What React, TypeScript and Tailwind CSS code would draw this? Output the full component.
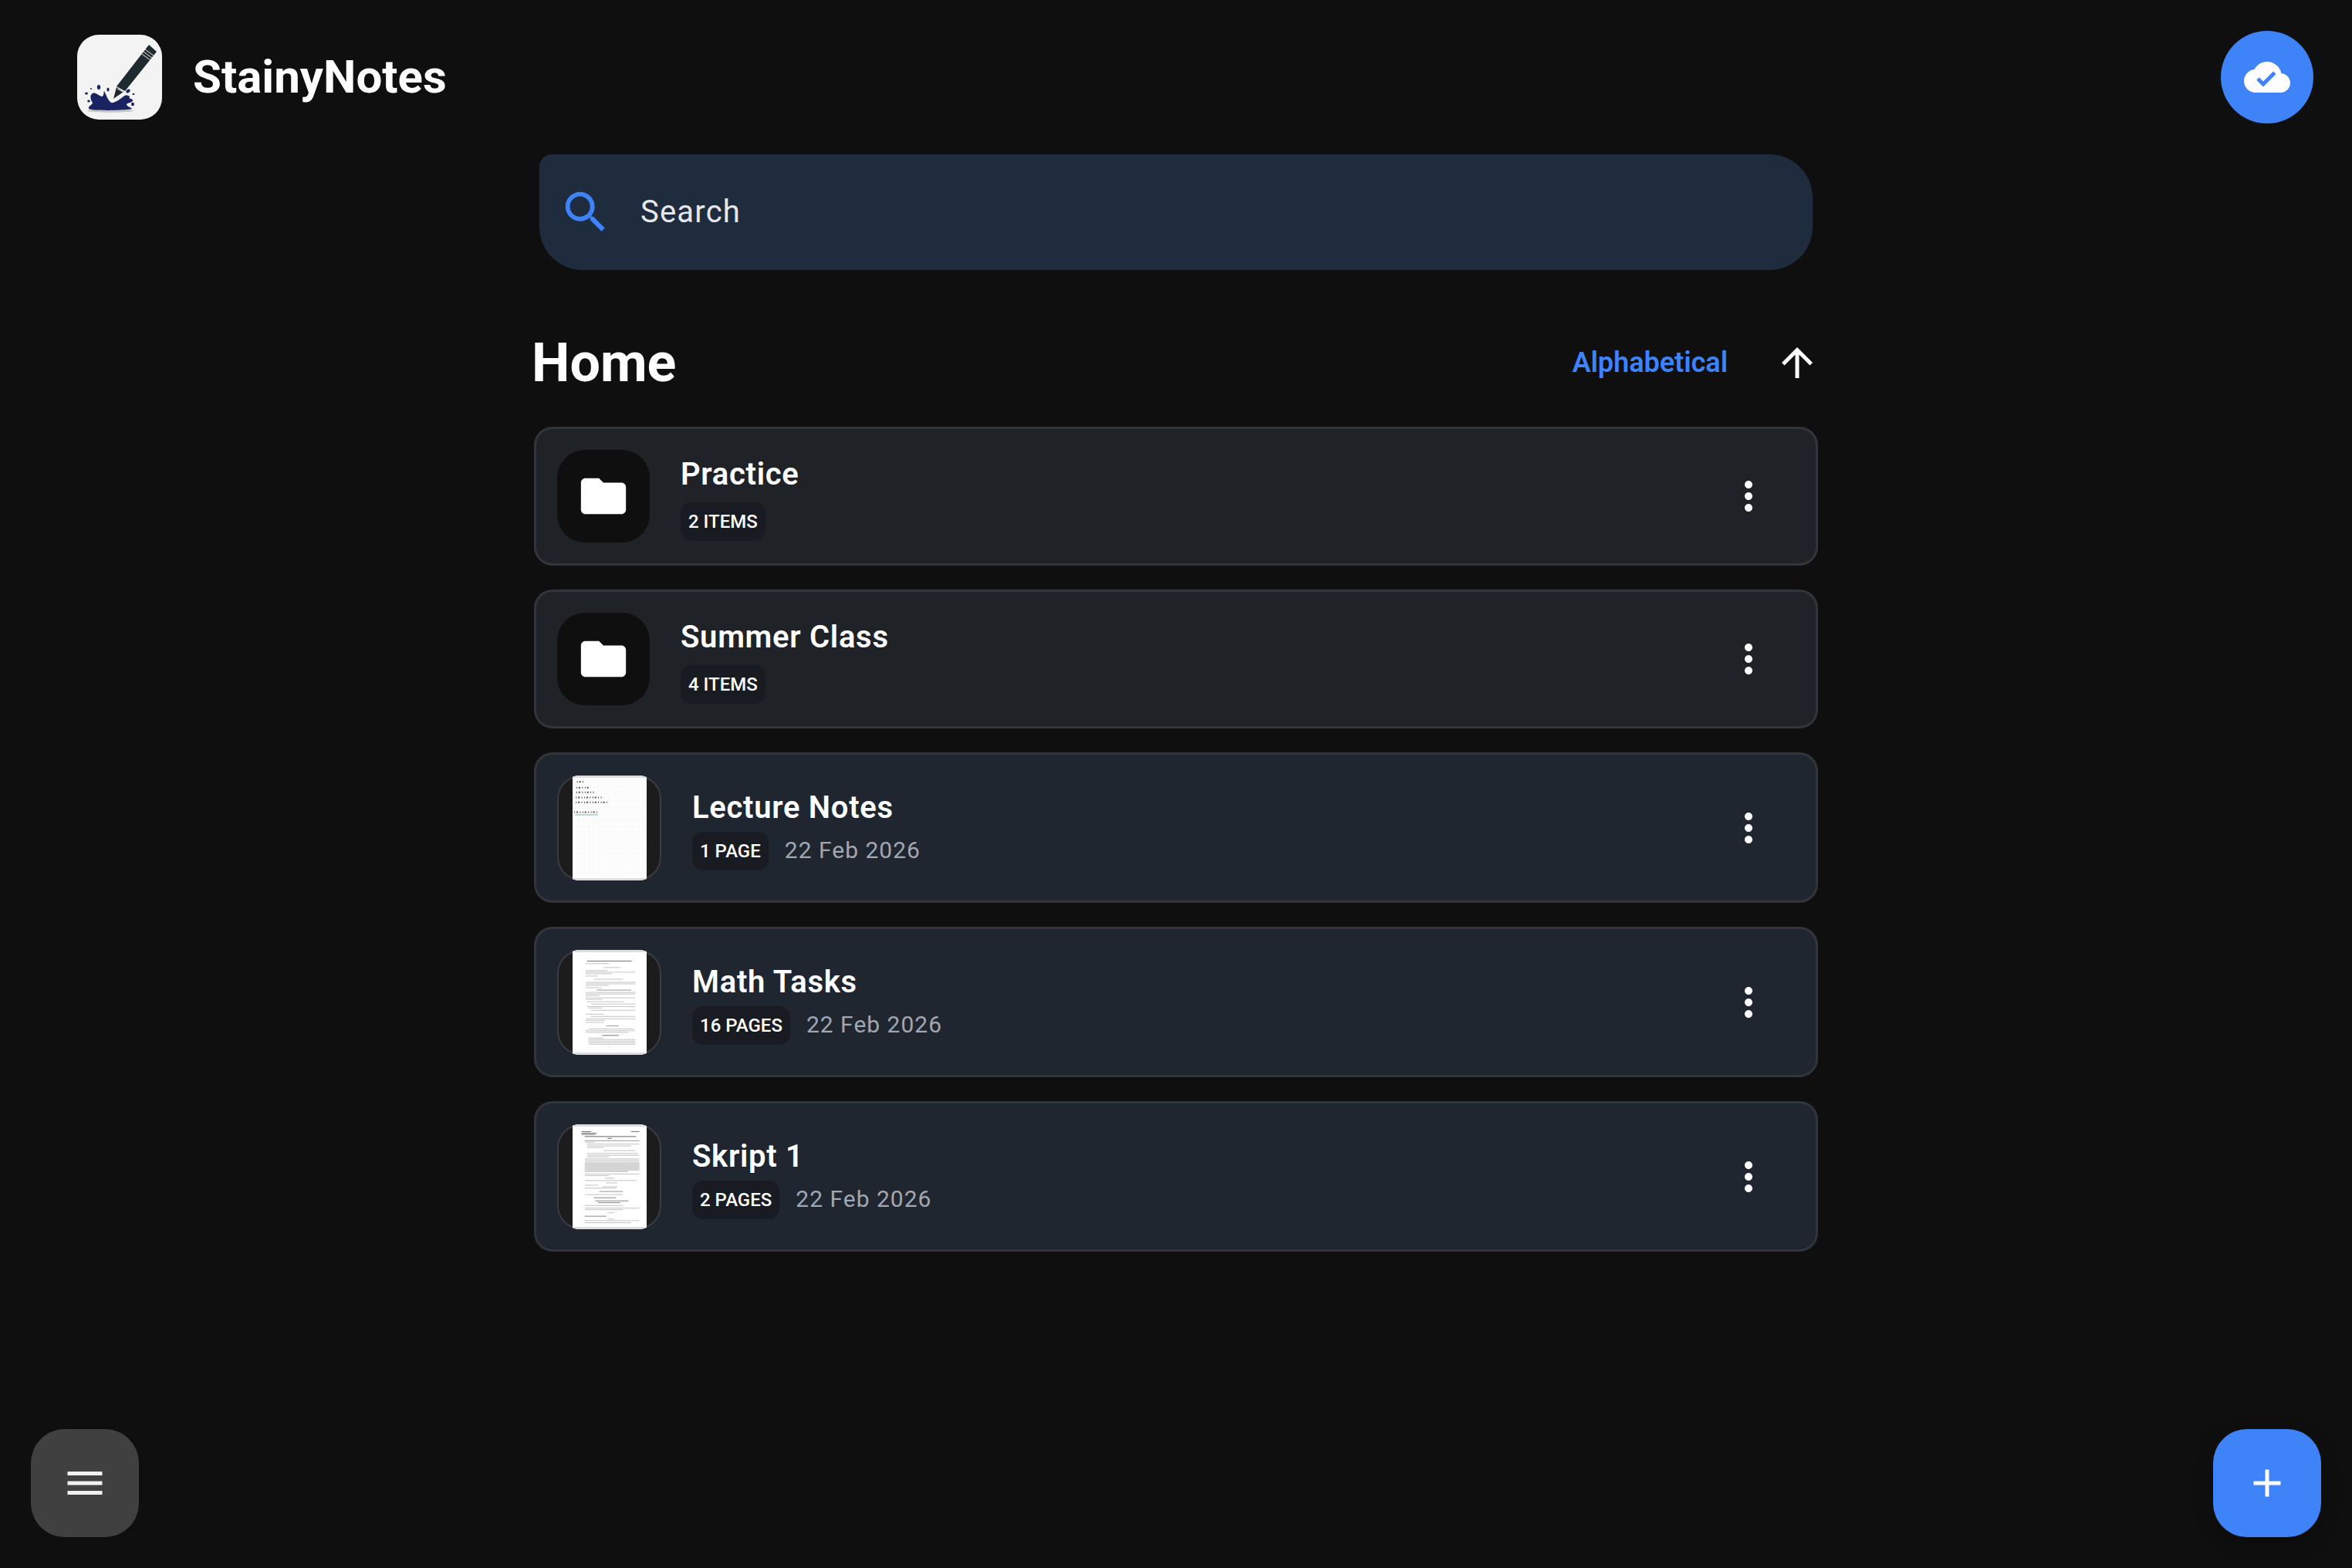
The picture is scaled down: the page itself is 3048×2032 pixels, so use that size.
import React from 'react';
import { MdAdd, MdArrowUpward, MdCloudDone, MdFolder, MdMenu, MdMoreVert, MdSearch } from 'react-icons/md';

type PageLine = [number, number, number, string?];

const MATH_LINES: PageLine[] = [
  [135, 170, 332, '#777'], [145, 165, 250], [160, 230, 290], [172, 165, 245], [178, 165, 345], [184, 165, 260],
  [193, 165, 210], [205, 195, 300], [217, 165, 345], [223, 165, 345], [229, 165, 250], [238, 165, 225],
  [247, 205, 330, '#999'], [256, 165, 345], [262, 165, 345], [268, 165, 215], [277, 165, 345], [283, 165, 225],
  [292, 170, 305], [301, 185, 345], [311, 170, 345], [316, 175, 225], [325, 185, 345], [340, 165, 230],
  [349, 185, 345], [358, 165, 345], [364, 165, 235], [372, 165, 230], [385, 240, 285, '#999'], [397, 175, 340],
  [404, 165, 345], [410, 165, 320], [422, 225, 285, '#777'], [432, 175, 230], [438, 175, 345], [444, 175, 345],
  [450, 175, 345], [456, 175, 345], [468, 249, 253],
];

const SKRIPT_LINES: PageLine[] = [
  [800, 150, 185, '#777'], [800, 330, 360, '#777'], [806, 150, 205, '#777'], [811, 150, 200, '#777'],
  [819, 162, 348, '#666'], [826, 245, 260, '#666'], [835, 162, 360, '#999'], [841, 162, 200], [848, 170, 360],
  [855, 170, 330], [861, 170, 230], [873, 230, 345], [884, 170, 355], [891, 170, 360], [897, 170, 250],
  [905, 162, 360], [911, 162, 360], [917, 162, 360], [923, 162, 360, '#aaa'], [929, 162, 360, '#aaa'],
  [935, 162, 360, '#aaa'], [941, 162, 360, '#aaa'], [947, 162, 360, '#aaa'], [953, 162, 320, '#aaa'],
  [963, 162, 360], [969, 162, 250], [979, 235, 270], [988, 162, 350], [997, 240, 280], [1006, 162, 210],
  [1012, 225, 280], [1017, 162, 275], [1030, 215, 300, '#999'], [1042, 162, 300], [1054, 195, 275, '#888'],
  [1066, 200, 320, '#888'], [1073, 210, 290, '#888'], [1084, 162, 300], [1094, 162, 360], [1100, 162, 300],
  [1112, 245, 270], [1125, 162, 240, '#888'], [1136, 245, 270], [1142, 162, 360], [1150, 162, 330],
];

const LECTURE_LINES: PageLine[] = [
  [128, 162, 192], [150, 160, 205], [168, 160, 228], [188, 158, 255], [207, 158, 275], [245, 152, 240],
];

function MathPage({ x, y, h, lines }: { x: number; y: number; h: number; lines: PageLine[] }) {
  return (
    <svg viewBox={`${x} ${y} 268 ${h}`} preserveAspectRatio="none" className="h-full w-[96px] shrink-0">
      <rect x={x} y={y} width="268" height={h} fill="#ffffff" />
      <rect x={x} y={y} width="268" height="9" fill="#dddddd" />
      <rect x={x} y={y + h - 9} width="268" height="9" fill="#dddddd" />
      {lines.map(([ly, x1, x2, color], i) => (
        <rect key={i} x={x1} y={ly - 1.5} width={x2 - x1} height="3" fill={color ?? '#c4c4c4'} />
      ))}
    </svg>
  );
}

function LecturePage() {
  const grid = Array.from({ length: 16 }, (_, i) => i);
  return (
    <svg viewBox="146 103 268 407" preserveAspectRatio="none" className="h-full w-[96px] shrink-0">
      <rect x="146" y="103" width="268" height="407" fill="#fdfdfd" />
      {grid.map(i => (
        <rect key={`h${i}`} x="146" y={120 + i * 26} width="268" height="1.5" fill="#f4f4f4" />
      ))}
      {grid.map(i => (
        <rect key={`v${i}`} x={150 + i * 18} y="103" width="1.5" height="407" fill="#f6f6f6" />
      ))}
      <rect x="146" y="103" width="268" height="9" fill="#dddddd" />
      <rect x="146" y="501" width="268" height="9" fill="#dddddd" />
      {LECTURE_LINES.map(([ly, x1, x2], i) => (
        <line key={i} x1={x1} x2={x2} y1={ly} y2={ly} stroke="#555" strokeWidth="6" strokeDasharray="3 5 6 6 3 7" />
      ))}
      <rect x="155" y="254" width="83" height="3" fill="#7fb0bd" />
    </svg>
  );
}

function Logo() {
  return (
    <svg viewBox="0 0 110 110" className="w-[110px] h-[110px] shrink-0">
      <rect width="110" height="110" rx="28" fill="#f3f3f3" />
      <ellipse cx="43" cy="98.5" rx="30" ry="2.2" fill="#b9b9b9" opacity="0.8" />
      <path d="M93 13 L103 22 L62 73 L51 67 Z" fill="#1f2a30" />
      <path d="M51 68 L60 74 L47 83 Z" fill="#1f2a30" />
      <path d="M52 70 L59 74" stroke="#f3f3f3" strokeWidth="1" />
      <path d="M88 19 L99 27 M86 22 L97 30 M84 25 L95 33" stroke="#f3f3f3" strokeWidth="1" />
      <path
        d="M15 96 C14 92 20 91 20 88 C17 84 16 78 20 76 C24 74 29 80 32 80 C35 80 34 74 35 73 C38 78 39 84 44 88 C48 89 55 84 60 80 C62 78 66 78 68 80 C66 84 72 82 72 85 C72 88 66 88 64 90 C64 93 70 94 71 96 C66 98 20 99 15 96 Z"
        fill="#1a2362"
      />
      <ellipse cx="28" cy="68" rx="2.2" ry="3" fill="#1a2362" />
      <ellipse cx="40" cy="71" rx="1.6" ry="2.6" fill="#1a2362" />
      <ellipse cx="12" cy="76" rx="2" ry="1.6" fill="#1a2362" />
      <ellipse cx="15" cy="86" rx="1.8" ry="1.6" fill="#1a2362" />
      <ellipse cx="18" cy="70" rx="1" ry="1" fill="#1a2362" />
      <ellipse cx="66" cy="73" rx="3" ry="2" fill="#1a2362" transform="rotate(-35 66 73)" />
      <ellipse cx="73" cy="77" rx="1.6" ry="1" fill="#1a2362" />
      <ellipse cx="72" cy="90" rx="2" ry="2.2" fill="#1a2362" />
    </svg>
  );
}

function Badge({ label }: { label: string }) {
  return (
    <span className="flex items-center h-[50px] px-[10px] rounded-[14px] bg-[#181b21] text-[24px] font-medium leading-none text-white">
      {label}
    </span>
  );
}

function MoreButton() {
  return <MdMoreVert className="ml-auto mr-[30px] text-white shrink-0" size={60} />;
}

function FolderCard({ name, count }: { name: string; count: string }) {
  return (
    <div className="flex items-center h-[180px] px-[27px] gap-10 rounded-[24px] border-3 border-[#32353b] bg-[#1f2328]">
      <div className="flex items-center justify-center w-[120px] h-[120px] rounded-[36px] bg-[#0f0f0f] shrink-0">
        <MdFolder className="text-white" size={70} />
      </div>
      <div className="flex flex-col items-start mt-[6px]">
        <span className="text-[40px] leading-[48px] font-semibold tracking-[0.7px] text-white">{name}</span>
        <div className="mt-[12px]">
          <Badge label={count} />
        </div>
      </div>
      <MoreButton />
    </div>
  );
}

function FileCard({ name, pages, date, thumb }: { name: string; pages: string; date: string; thumb: React.ReactNode }) {
  return (
    <div className="flex items-center h-[195px] px-[27px] gap-10 rounded-[24px] border-3 border-[#32353b] bg-[#1f2630]">
      <div className="flex justify-center w-[135px] h-[136px] rounded-[30px] overflow-hidden bg-[#1c1c1c] shadow-[inset_0_0_0_2px_#3a3d44] shrink-0">
        {thumb}
      </div>
      <div className="flex flex-col items-start mt-[6px]">
        <span className="text-[40px] leading-[48px] font-semibold tracking-[0.7px] text-white">{name}</span>
        <div className="flex items-center gap-[21px] mt-[7px]">
          <Badge label={pages} />
          <span className="pb-[3px] text-[30px] tracking-[1px] text-[#a1a7b3]">{date}</span>
        </div>
      </div>
      <MoreButton />
    </div>
  );
}

export default function App() {
  return (
    <div className="relative w-[3048px] h-[2032px] overflow-hidden bg-[#0f0f0f] font-['Roboto',sans-serif]">
      {/* Header */}
      <header className="flex items-center justify-between pt-[40px] pl-[100px] pr-[50px]">
        <div className="flex items-center gap-10">
          <Logo />
          <span className="text-[60px] font-bold leading-none text-white">StainyNotes</span>
        </div>
        <button className="flex items-center justify-center w-[120px] h-[120px] rounded-full bg-[#3f83f8] text-white">
          <MdCloudDone size={60} />
        </button>
      </header>

      <main className="w-[1664px] mx-auto">
        {/* Search */}
        <div className="flex items-center h-[150px] mt-[40px] mx-[7px] pl-[25px] gap-[36px] rounded-tl-[16px] rounded-tr-[56px] rounded-br-[56px] rounded-bl-[56px] bg-[#1f2c3e]">
          <MdSearch className="text-[#3f83f8] shrink-0" size={70} />
          <span className="text-[40px] tracking-[1.2px] text-[#e5e7eb]">Search</span>
        </div>

        {/* Title row */}
        <div className="flex items-center justify-between h-[100px] mt-[70px] mb-[33px] -mx-[3px]">
          <h1 className="text-[70px] font-bold leading-none text-white">Home</h1>
          <div className="flex items-center gap-[60px]">
            <span className="text-[36px] font-semibold text-[#3f83f8]">Alphabetical</span>
            <MdArrowUpward className="text-white" size={60} />
          </div>
        </div>

        {/* Items */}
        <div className="flex flex-col gap-[31px]">
          <FolderCard name="Practice" count="2 ITEMS" />
          <FolderCard name="Summer Class" count="4 ITEMS" />
          <FileCard name="Lecture Notes" pages="1 PAGE" date="22 Feb 2026" thumb={<LecturePage />} />
          <FileCard
            name="Math Tasks"
            pages="16 PAGES"
            date="22 Feb 2026"
            thumb={<MathPage x={118} y={92} h={405} lines={MATH_LINES} />}
          />
          <FileCard
            name="Skript 1"
            pages="2 PAGES"
            date="22 Feb 2026"
            thumb={<MathPage x={118} y={772} h={403} lines={SKRIPT_LINES} />}
          />
        </div>
      </main>

      {/* Floating buttons */}
      <button className="absolute left-[40px] bottom-[40px] flex items-center justify-center w-[140px] h-[140px] rounded-[44px] bg-[#404040] text-[#f0f0f0]">
        <MdMenu size={60} />
      </button>
      <button className="absolute right-[40px] bottom-[40px] flex items-center justify-center w-[140px] h-[140px] rounded-[44px] bg-[#3f83f8] text-white shadow-[0_8px_24px_rgba(0,0,0,0.25)]">
        <MdAdd size={60} />
      </button>
    </div>
  );
}
